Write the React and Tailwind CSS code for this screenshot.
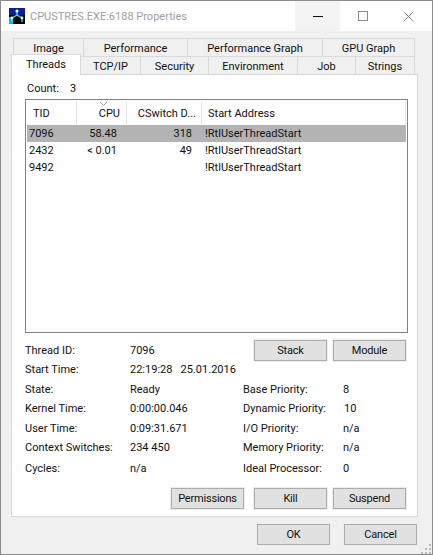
import React from 'react';

const font = { fontFamily: 'Roboto, "Noto Sans", sans-serif' };

const backTabs = [
  { label: 'Image', w: 'w-[71px]' },
  { label: 'Performance', w: 'w-[104px]' },
  { label: 'Performance Graph', w: 'w-[135px]' },
  { label: 'GPU Graph', w: 'w-[92px]' },
];

const frontTabs = [
  { label: 'TCP/IP', w: 'w-[60px]' },
  { label: 'Security', w: 'w-[68px]' },
  { label: 'Environment', w: 'w-[89px]' },
  { label: 'Job', w: 'w-[58px]' },
  { label: 'Strings', w: 'w-[59px]' },
];

const threads = [
  { tid: '7096', cpu: '58.48', cs: '318', selected: true },
  { tid: '2432', cpu: '< 0.01', cs: '49' },
  { tid: '9492', cpu: '', cs: '' },
];

const Btn = ({ children, className = '' }) => (
  <button className={`w-[73px] h-[21px] bg-[#e1e1e1] border border-[#adadad] text-[#111] text-[11px] tracking-[-0.2px] leading-none ring-1 ring-[#ededed] ${className}`}>
    {children}
  </button>
);

const Row = ({ label, value, rlabel, rvalue, h }) => (
  <div className={`flex items-center pt-[2px] ${h}`}>
    <span className="w-[105px]">{label}</span>
    <span className="w-[113px] whitespace-pre">{value}</span>
    <span className="w-[100px]">{rlabel}</span>
    <span className="whitespace-pre">{rvalue}</span>
  </div>
);

const App = () => {
  return (
    <div style={font} className="w-[433px] h-[555px] flex flex-col bg-[#f0f0f0] border border-[#8c8c8c] text-[11px] text-[#111] overflow-hidden">
      {/* title bar */}
      <div className="h-[30px] shrink-0 bg-white flex items-center">
        <svg width="16" height="16" viewBox="0 0 16 16" className="ml-[8px] mr-[5px] shrink-0">
          <rect width="16" height="16" fill="#000" />
          <rect x="0" y="0" width="16" height="7" fill="#0a1f9c" />
          <rect x="0" y="9" width="4" height="7" fill="#08b4e8" />
          <path d="M8 2v5M8 7L3 10M8 7l5 3M3 10v4M13 10v4" stroke="#2de6f0" strokeWidth="1.3" fill="none" />
          <circle cx="8" cy="3" r="1.6" fill="#fff" />
          <circle cx="3" cy="10" r="1.4" fill="#fff" />
          <circle cx="13" cy="10" r="1.4" fill="#fff" />
        </svg>
        <span className="text-[11px] text-[#a0a0a0] pt-[2px]">CPUSTRES.EXE:6188 Properties</span>
        <div className="ml-auto flex h-full">
          <div className="w-[45px] h-full bg-[#f3f3f3] flex items-center justify-center">
            <div className="w-[10px] h-px bg-[#111]" />
          </div>
          <div className="w-[46px] h-full flex items-center justify-center">
            <div className="w-[10px] h-[10px] border border-[#8a8a8a]" />
          </div>
          <div className="w-[45px] h-full flex items-center justify-center mr-[1px]">
            <svg width="11" height="11" viewBox="0 0 11 11">
              <path d="M0.5 0.5l10 10M10.5 0.5l-10 10" stroke="#8a8a8a" strokeWidth="1" />
            </svg>
          </div>
        </div>
      </div>

      {/* tabs and panel */}
      <div className="pt-[7px] pl-[10px]">
        <div className="flex ml-[2px] h-[18px]">
          {backTabs.map((t) => (
            <div key={t.label} className={`${t.w} border-t border-r first:border-l border-[#d9d9d9] flex items-center justify-center pt-[3px]`}>
              {t.label}
            </div>
          ))}
        </div>
        <div className="flex items-end h-[18px] relative">
          <div className="w-[70px] h-[21px] -mt-[3px] bg-white border-t border-x border-[#d9d9d9] flex items-start justify-center pt-[2px] relative z-10 -mb-px">
            Threads
          </div>
          {frontTabs.map((t) => (
            <div key={t.label} className={`${t.w} h-[18px] border-t border-r border-[#d9d9d9] flex items-center justify-center pt-[3px]`}>
              {t.label}
            </div>
          ))}
        </div>

        <div className="w-[407px] h-[443px] bg-white border border-[#d9d9d9] pl-[13px] pr-[8px]">
          <div className="flex h-[24px] items-center pl-[2px] pt-[4px]">
            <span className="w-[43px]">Count:</span>
            <span>3</span>
          </div>

          {/* thread list */}
          <div className="w-[383px] h-[234px] border border-[#828282] p-px">
            <div className="flex h-[23px] items-center relative">
              <div className="w-[50px] h-full border-r border-[#e5e5e5] pl-[6px] pt-[4px] flex items-center">TID</div>
              <div className="w-[50px] h-full border-r border-[#e5e5e5] flex items-center justify-end pr-[6px] pt-[4px]">CPU</div>
              <div className="w-[75px] h-full border-r border-[#e5e5e5] flex items-center justify-end pr-[5px] pt-[4px]">CSwitch D...</div>
              <div className="w-[204px] h-full border-r border-[#e5e5e5] pl-[6px] pt-[4px] flex items-center">Start Address</div>
              <svg width="7" height="4" viewBox="0 0 7 4" className="absolute left-[73px] top-[1px]">
                <path d="M0 0l3.5 3.5L7 0" stroke="#9a9a9a" fill="none" />
              </svg>
            </div>
            <div className="mt-px">
              {threads.map((t) => (
                <div key={t.tid} className={`flex items-center pt-[2px] h-[17px] w-[379px] ${t.selected ? 'bg-[#b3b3b3]' : ''}`}>
                  <span className="w-[49px] pl-[2px]">{t.tid}</span>
                  <span className="w-[41px] text-right">{t.cpu}</span>
                  <span className="w-[75px] text-right">{t.cs}</span>
                  <span className="ml-[13px]">!RtlUserThreadStart</span>
                </div>
              ))}
            </div>
          </div>

          {/* details */}
          <div className="relative mt-px">
            <div className="flex gap-[6px] absolute right-[3px] top-[6px]">
              <Btn>Stack</Btn>
              <Btn>Module</Btn>
            </div>
            <div className="pt-[7px]">
              <Row h="h-[18px]" label="Thread ID:" value="7096" />
              <Row h="h-[20px]" label="Start Time:" value="22:19:28   25.01.2016" />
              <Row h="h-[20px]" label="State:" value="Ready" rlabel="Base Priority:" rvalue="8" />
              <Row h="h-[19px]" label="Kernel Time:" value="0:00:00.046" rlabel="Dynamic Priority:" rvalue={'\u200a10'} />
              <Row h="h-[20px]" label="User Time:" value="0:09:31.671" rlabel="I/O Priority:" rvalue="n/a" />
              <Row h="h-[19px]" label="Context Switches:" value="234 450" rlabel="Memory Priority:" rvalue="n/a" />
              <Row h="h-[23px]" label="Cycles:" value="n/a" rlabel="Ideal Processor:" rvalue="0" />
            </div>
            <div className="flex justify-end gap-[6px] mt-[8px] mr-[3px]">
              <Btn className="mr-[4px]">Permissions</Btn>
              <Btn>Kill</Btn>
              <Btn>Suspend</Btn>
            </div>
          </div>
        </div>
      </div>

      {/* footer */}
      <div className="flex justify-end gap-[14px] pr-[15px] pt-[7px] relative grow">
        <Btn className="ring-0">OK</Btn>
        <Btn className="ring-0">Cancel</Btn>
        <svg width="11" height="11" viewBox="0 0 11 11" className="absolute right-0 bottom-0">
          <path d="M8 1h2v2H8zM4 5h2v2H4zM8 5h2v2H8zM0 9h2v2H0zM4 9h2v2H4zM8 9h2v2H8z" fill="#b8b8b8" />
        </svg>
      </div>
    </div>
  );
};

export default App;
